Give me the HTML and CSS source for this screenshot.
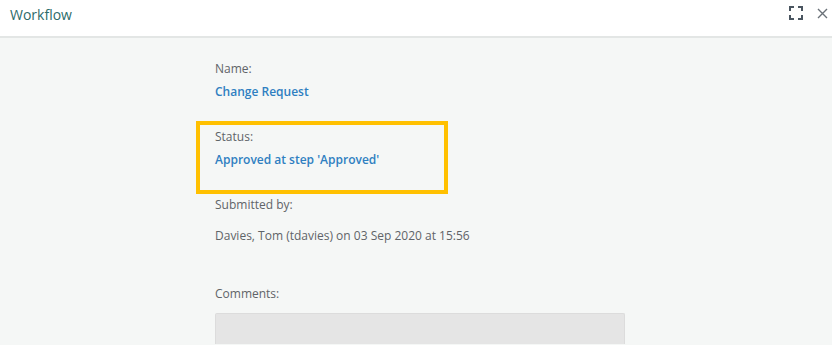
FILE: index.html
```html
<!DOCTYPE html>
<html lang="en">
<head>
    <meta charset="UTF-8">
    <title>Workflow</title>
    <link rel="stylesheet" href="styles.css">
</head>
<body>
    <div class="panel">
        <header class="panel-header">
            <h1>Workflow</h1>
            <div class="panel-actions">
                <button class="icon-btn" title="Maximise">
                    <svg width="14" height="14" viewBox="0 0 14 14" fill="none" stroke="#4a5560" stroke-width="2">
                        <path d="M1 5V1h4M9 1h4v4M13 9v4H9M5 13H1V9"/>
                    </svg>
                </button>
                <button class="icon-btn" title="Close">
                    <svg width="11" height="11" viewBox="0 0 11 11" stroke="#6a7178" stroke-width="1.4">
                        <path d="M1 1l9 9M10 1l-9 9"/>
                    </svg>
                </button>
            </div>
        </header>

        <div class="panel-body">
            <div class="field">
                <div class="field-label">Name:</div>
                <div class="field-value link">Change Request</div>
            </div>

            <div class="field highlighted">
                <div class="field-label">Status:</div>
                <div class="field-value link">Approved at step 'Approved'</div>
            </div>

            <div class="field">
                <div class="field-label">Submitted by:</div>
                <div class="field-value spaced">Davies, Tom (tdavies) on 03 Sep 2020 at 15:56</div>
            </div>

            <div class="field comments">
                <div class="field-label">Comments:</div>
                <div class="comment-box"></div>
            </div>
        </div>
    </div>
</body>
</html>
```

FILE: styles.css
```css
body {
    margin: 0;
    font-family: "Open Sans", "Noto Sans", sans-serif;
    background: #f5f7f6;
    overflow: hidden;
}

.panel {
    height: 345px;
    display: flex;
    flex-direction: column;
}

.panel-header {
    flex-shrink: 0;
    height: 36px;
    background: #fff;
    border-bottom: 2px solid #e3e6e5;
    display: flex;
    align-items: center;
    justify-content: space-between;
    padding: 0 4px 0 10px;
}

.panel-header h1 {
    margin: -8px 0 0;
    font-size: 14px;
    font-weight: 400;
    color: #2d6b6a;
}

.panel-actions {
    display: flex;
    align-items: center;
    gap: 14px;
    margin-top: -10px;
}

.icon-btn {
    background: none;
    border: none;
    padding: 0;
    display: flex;
    cursor: pointer;
}

.panel-body {
    padding: 23px 0 0 215px;
}

.field {
    width: 410px;
    margin-bottom: 29px;
}

.field-label {
    font-size: 12px;
    color: #5f6468;
    line-height: 16px;
}

.field-value {
    font-size: 12px;
    color: #5f6468;
    line-height: 16px;
    margin-top: 7px;
}

.field-value.spaced {
    margin-top: 15px;
}

.field-value.link {
    color: #2f7fc1;
    font-weight: 600;
}

.highlighted {
    position: relative;
}

.highlighted::after {
    content: "";
    position: absolute;
    left: -19px;
    top: -8px;
    width: 244px;
    height: 65px;
    border: 4px solid #ffc000;
}

.comments {
    margin-top: 42px;
    margin-bottom: 0;
}

.comment-box {
    margin-top: 11px;
    height: 30px;
    background: #e5e5e5;
    border: 1px solid #dcdcdc;
    border-bottom: none;
    border-radius: 2px 2px 0 0;
}
```
